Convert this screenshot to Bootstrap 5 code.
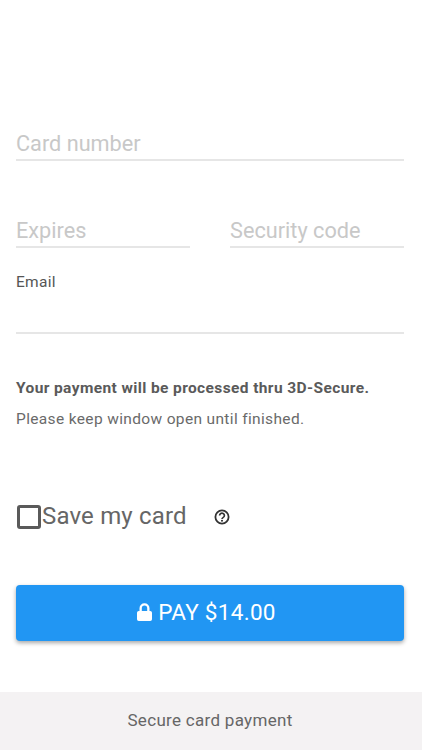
<!DOCTYPE html>
<html lang="en"><head><meta charset="utf-8">
<link href="https://cdn.jsdelivr.net/npm/bootstrap@5.3.0/dist/css/bootstrap.min.css" rel="stylesheet">
<style>
html,body{height:100%}
body{font-family:Roboto,sans-serif;color:#666;background:#fff;width:422px;height:750px;overflow:hidden}
.pay-wrap{height:692px;padding:129px 18px 0 16px}
.fld{border-bottom:2px solid #e6e6e6;font-size:21.7px;line-height:30px;color:#c8c8c8;height:32px}
.fld-half{width:174px}
.row-exp{margin-top:55px;justify-content:space-between}
.email-label{font-size:15.5px;line-height:18px;margin-top:25px;color:#555;letter-spacing:.3px}
.email-fld{height:43px;border-bottom:2px solid #e6e6e6}
.msg-strong{font-size:15.5px;font-weight:700;line-height:20px;margin-top:44px;letter-spacing:.39px;color:#5a5a5a}
.msg-plain{font-size:15.5px;line-height:20px;margin-top:11px;letter-spacing:.35px;color:#6a6a6a}
.save-row{margin-top:71px;height:32px;font-size:24px;line-height:28px;letter-spacing:.17px}
.box{width:24px;height:24px;border:3px solid #5a5a5a;border-radius:3px;margin-left:1px;flex:none;margin-right:1px;transform:translateY(1px)}
.help{margin-left:27px;transform:translateY(1px)}
.pay-btn{margin-top:53px;width:388px;height:56px;background:#2196f3;color:#fff;border:0;border-radius:4px;font-size:22.5px;box-shadow:0 2px 4px rgba(0,0,0,.35);letter-spacing:.3px;padding:0 7px 0 0;gap:6px}
.pay-btn svg{margin-bottom:3px}
.foot{height:58px;background:#f4f2f3;font-size:17px;color:#666;letter-spacing:.3px;padding-right:2px}
</style></head><body>
<div class="pay-wrap">
<div class="fld">Card number</div>
<div class="d-flex row-exp"><div class="fld fld-half">Expires</div><div class="fld fld-half">Security code</div></div>
<div class="email-label">Email</div>
<div class="email-fld"></div>
<div class="msg-strong">Your payment will be processed thru 3D-Secure.</div>
<div class="msg-plain">Please keep window open until finished.</div>
<div class="d-flex align-items-center save-row"><span class="box"></span><span>Save my card</span>
<svg class="help" width="16" height="16" viewBox="0 0 16 16" fill="none"><circle cx="8" cy="8" r="6.6" stroke="#333" stroke-width="1.8"/><path d="M5.6 6.5a2.4 2.300 0 1 1 3.700 1.900c-.9.6-1.300 1-1.300 1.700" stroke="#333" stroke-width="1.700"/><circle cx="8" cy="11.800" r="1.050" fill="#333"/></svg></div>
<button class="pay-btn d-flex align-items-center justify-content-center"><svg width="15" height="18" viewBox="0 0 15 18"><path fill="#fff" fill-rule="evenodd" d="M2.500 8V5.200a5 5 0 0 1 10 0V8h.7A1.800 1.800 0 0 1 15 9.800v6.400a1.800 1.800 0 0 1-1.800 1.800H1.800A1.800 1.800 0 0 1 0 16.200V9.800A1.800 1.800 0 0 1 1.800 8zm2.300 0h5.400V5.200a2.700 2.700 0 0 0-5.400 0z"/></svg><span>PAY $14.00</span></button>
</div>
<div class="foot d-flex align-items-center justify-content-center">Secure card payment</div>
</body></html>
